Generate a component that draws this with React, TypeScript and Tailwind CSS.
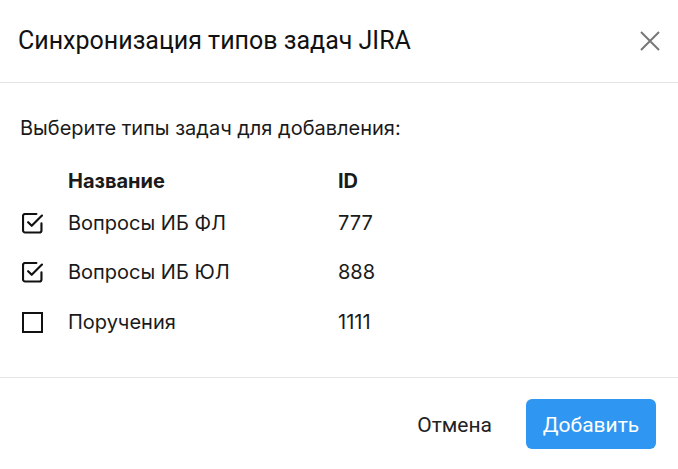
import React from "react";

function Checked() {
  return (
    <svg width="21" height="21" viewBox="2 2 20.5 20.5" fill="none" stroke="#111" strokeWidth="2.1" strokeLinecap="round" strokeLinejoin="round">
      <path d="M8 11l3.5 3.5L21.5 4.5" />
      <path d="M21 12v7a2 2 0 0 1-2 2H5a2 2 0 0 1-2-2V5a2 2 0 0 1 2-2h11" />
    </svg>
  );
}

function Unchecked() {
  return (
    <svg width="21" height="21" viewBox="0 0 21 21" fill="none">
      <rect x="1" y="1" width="19" height="19" stroke="#111" strokeWidth="2" />
    </svg>
  );
}

const rows = [
  { name: "Вопросы ИБ ФЛ", id: "777", checked: true, mt: "mt-[14px]" },
  { name: "Вопросы ИБ ЮЛ", id: "888", checked: true, mt: "mt-[21px]" },
  { name: "Поручения", id: "1111", checked: false, mt: "mt-[22px]" },
];

export default function App() {
  return (
    <div className="w-[678px] h-[469px] bg-white flex flex-col text-[#1a1a1a]" style={{ fontFamily: "Inter, 'Noto Sans', sans-serif" }}>
      <div className="h-[83px] border-b border-[#e5e5e5] flex items-center justify-between pl-[18px] pr-[17px] shrink-0">
        <div className="text-[25px] text-[#111]" style={{ fontFamily: "Roboto, sans-serif" }}>Синхронизация типов задач JIRA</div>
        <svg width="22" height="22" viewBox="0 0 22 22" fill="none">
          <path d="M2 2l18 18M20 2L2 20" stroke="#777" strokeWidth="2" />
        </svg>
      </div>
      <div className="flex-1 pl-[20px] pt-[31px]">
        <div className="text-[20px] leading-[28px]">Выберите типы задач для добавления:</div>
        <div className="mt-[25px] flex items-center h-[28px]">
          <div className="w-[48px]" />
          <div className="w-[270px] font-bold text-[20px]">Название</div>
          <div className="font-bold text-[20px]">ID</div>
        </div>
        {rows.map((r, i) => (
          <div key={i} className={`flex items-center h-[28px] ${r.mt}`}>
            <div className="w-[48px] pl-[2px] flex items-center">{r.checked ? <Checked /> : <Unchecked />}</div>
            <div className="w-[270px] text-[20px]">{r.name}</div>
            <div className="text-[20px]">{r.id}</div>
          </div>
        ))}
      </div>
      <div className="h-[92px] border-t border-[#e5e5e5] flex items-center justify-end pr-[22px] gap-[34px] shrink-0">
        <button className="text-[21px] text-[#222] pt-[5px]" style={{ fontFamily: "Roboto, sans-serif" }}>Отмена</button>
        <button className="w-[130px] h-[50px] rounded-[6px] bg-[#2f97f1] text-white text-[21px] pt-[5px]" style={{ fontFamily: "Roboto, sans-serif" }}>Добавить</button>
      </div>
    </div>
  );
}
